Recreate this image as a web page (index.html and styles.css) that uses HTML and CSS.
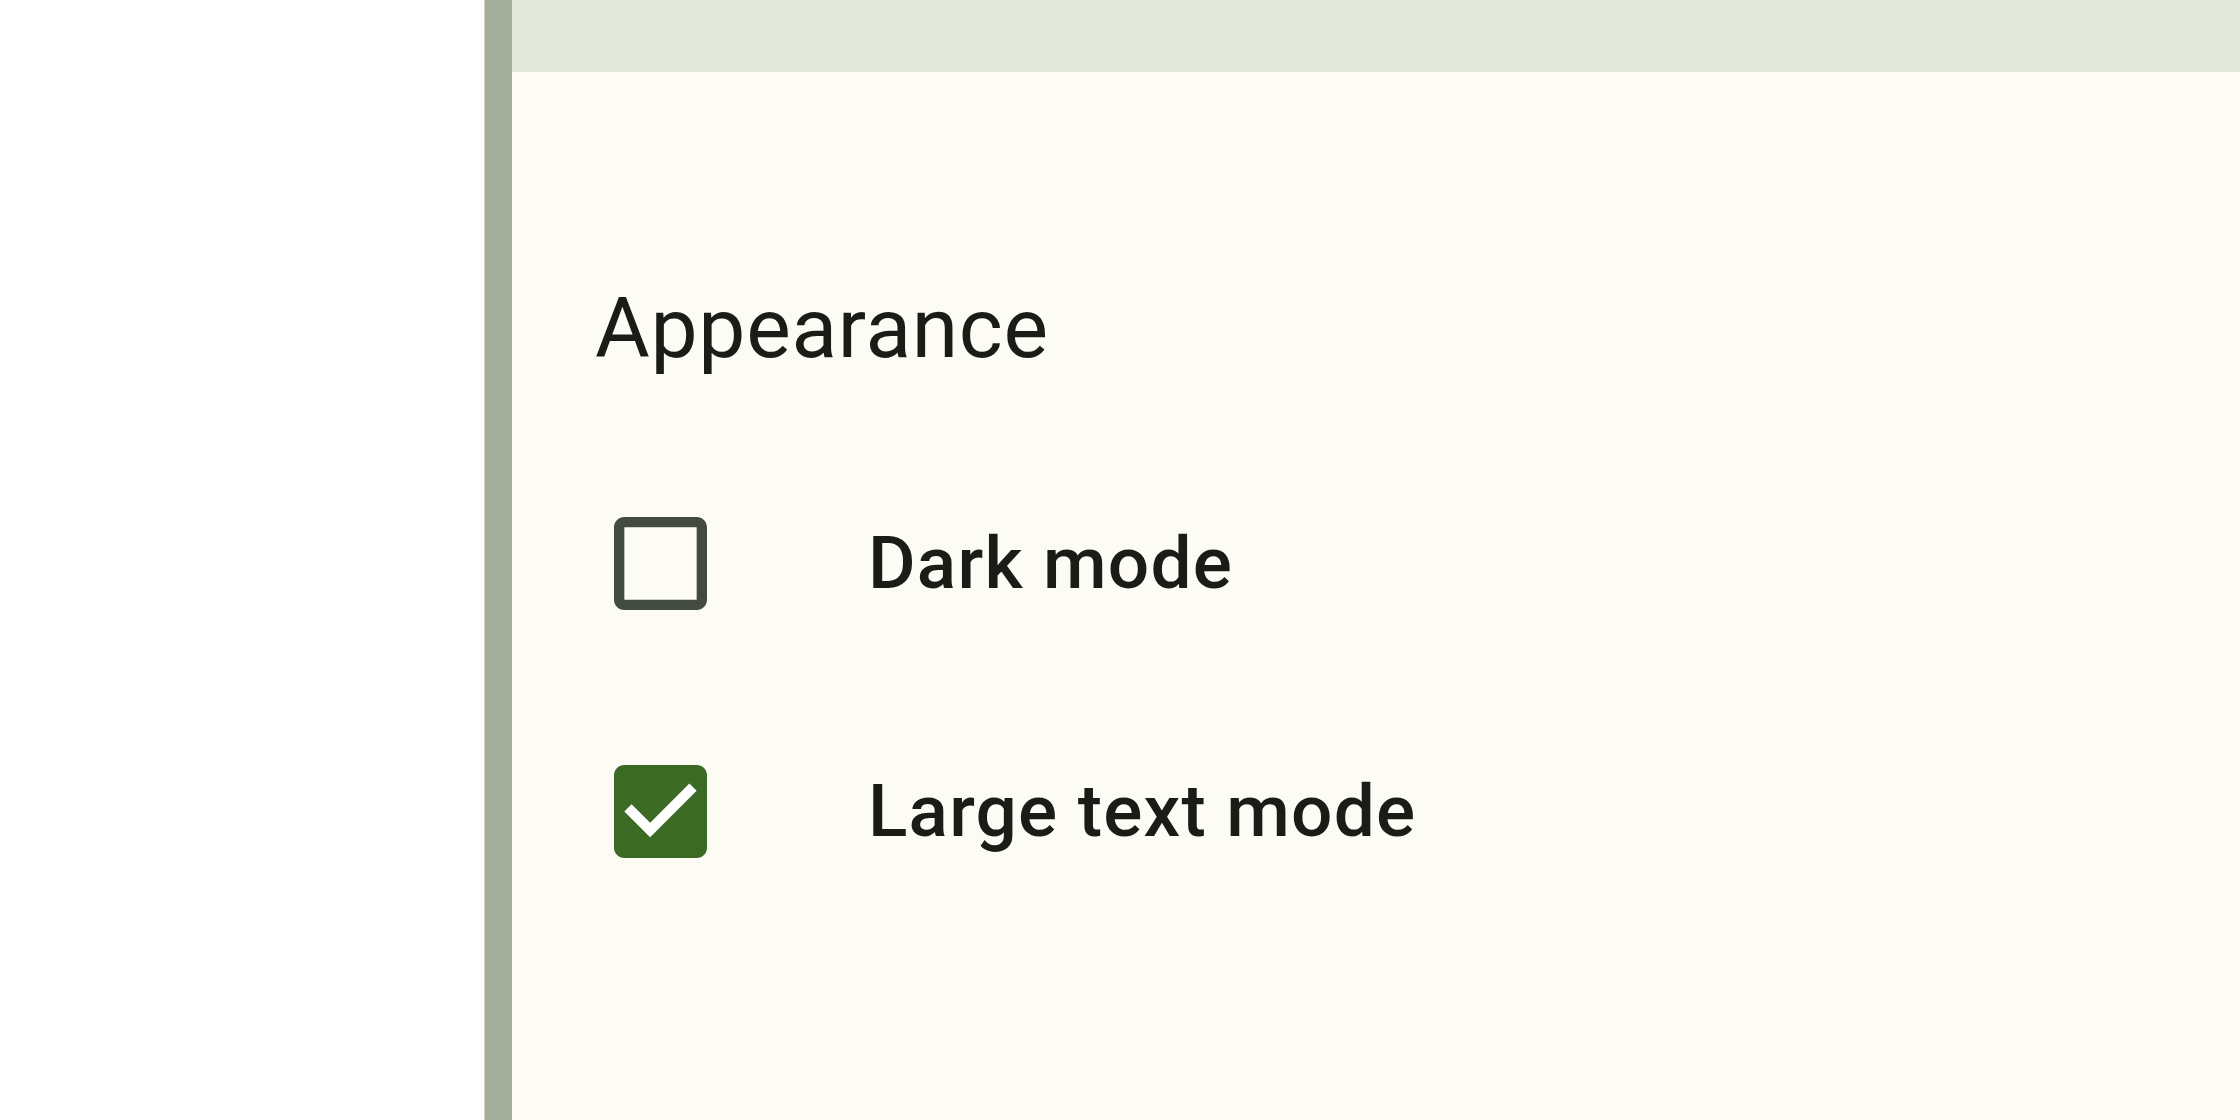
FILE: index.html
```html
<!DOCTYPE html>
<html lang="en">
<head>
  <meta charset="UTF-8" />
  <title>Settings</title>
  <meta name="viewport" content="width=device-width, initial-scale=1.0" />
  <link rel="stylesheet" href="styles.css">
</head>
<body>
  <div class="layout">
    <div class="blank"></div>
    <div class="rail"></div>

    <main class="page">
      <div class="topbar"></div>

      <section class="settings">
        <h2 class="section-title">Appearance</h2>

        <label class="option">
          <svg class="box" viewBox="3 3 18 18" aria-hidden="true">
            <path fill="#434a3f" d="M19 5v14H5V5h14m0-2H5c-1.1 0-2 .9-2 2v14c0 1.1.9 2 2 2h14c1.1 0 2-.9 2-2V5c0-1.1-.9-2-2-2z"/>
          </svg>
          <span class="option-label">Dark mode</span>
        </label>

        <label class="option">
          <svg class="box" viewBox="3 3 18 18" aria-hidden="true">
            <path fill="#3a6a23" d="M19 3H5c-1.11 0-2 .9-2 2v14c0 1.1.89 2 2 2h14c1.11 0 2-.9 2-2V5c0-1.1-.89-2-2-2z"/>
            <path fill="#ffffff" d="M10 17l-5-5 1.41-1.41L10 14.17l7.59-7.59L19 8l-9 9z"/>
          </svg>
          <span class="option-label">Large text mode</span>
        </label>
      </section>
    </main>
  </div>
</body>
</html>
```

FILE: styles.css
```css
html, body {
  margin: 0;
  height: 100%;
}
body {
  font-family: Roboto, "Noto Sans", "Liberation Sans", sans-serif;
  color: #1a1c18;
  background: #ffffff;
}
.layout {
  display: grid;
  grid-template-columns: 484px 1px 27px 1fr;
  height: 100vh;
}
.blank {
  background: #ffffff;
}
.rail {
  grid-column: 3;
  background: #a4af9b;
  border-left: 1px solid #c9d0c2;
  margin-left: -1px;
}
.page {
  background: #fcfcf5;
  display: flex;
  flex-direction: column;
}
.topbar {
  height: 72px;
  background: #e3e9da;
}
.settings {
  padding: 207px 0 0 83px;
}
.section-title {
  font-size: 84px;
  font-weight: 400;
  line-height: 100px;
  letter-spacing: 0.7px;
  margin: 0 0 138px 0;
}
.option {
  display: flex;
  align-items: center;
  padding-left: 19px;
  margin-bottom: 155px;
  cursor: pointer;
}
.box {
  width: 93px;
  height: 93px;
  flex: none;
  display: block;
}
.option-label {
  font-size: 73px;
  font-weight: 500;
  line-height: 93px;
  letter-spacing: 1.2px;
  margin-left: 161px;
}
```
